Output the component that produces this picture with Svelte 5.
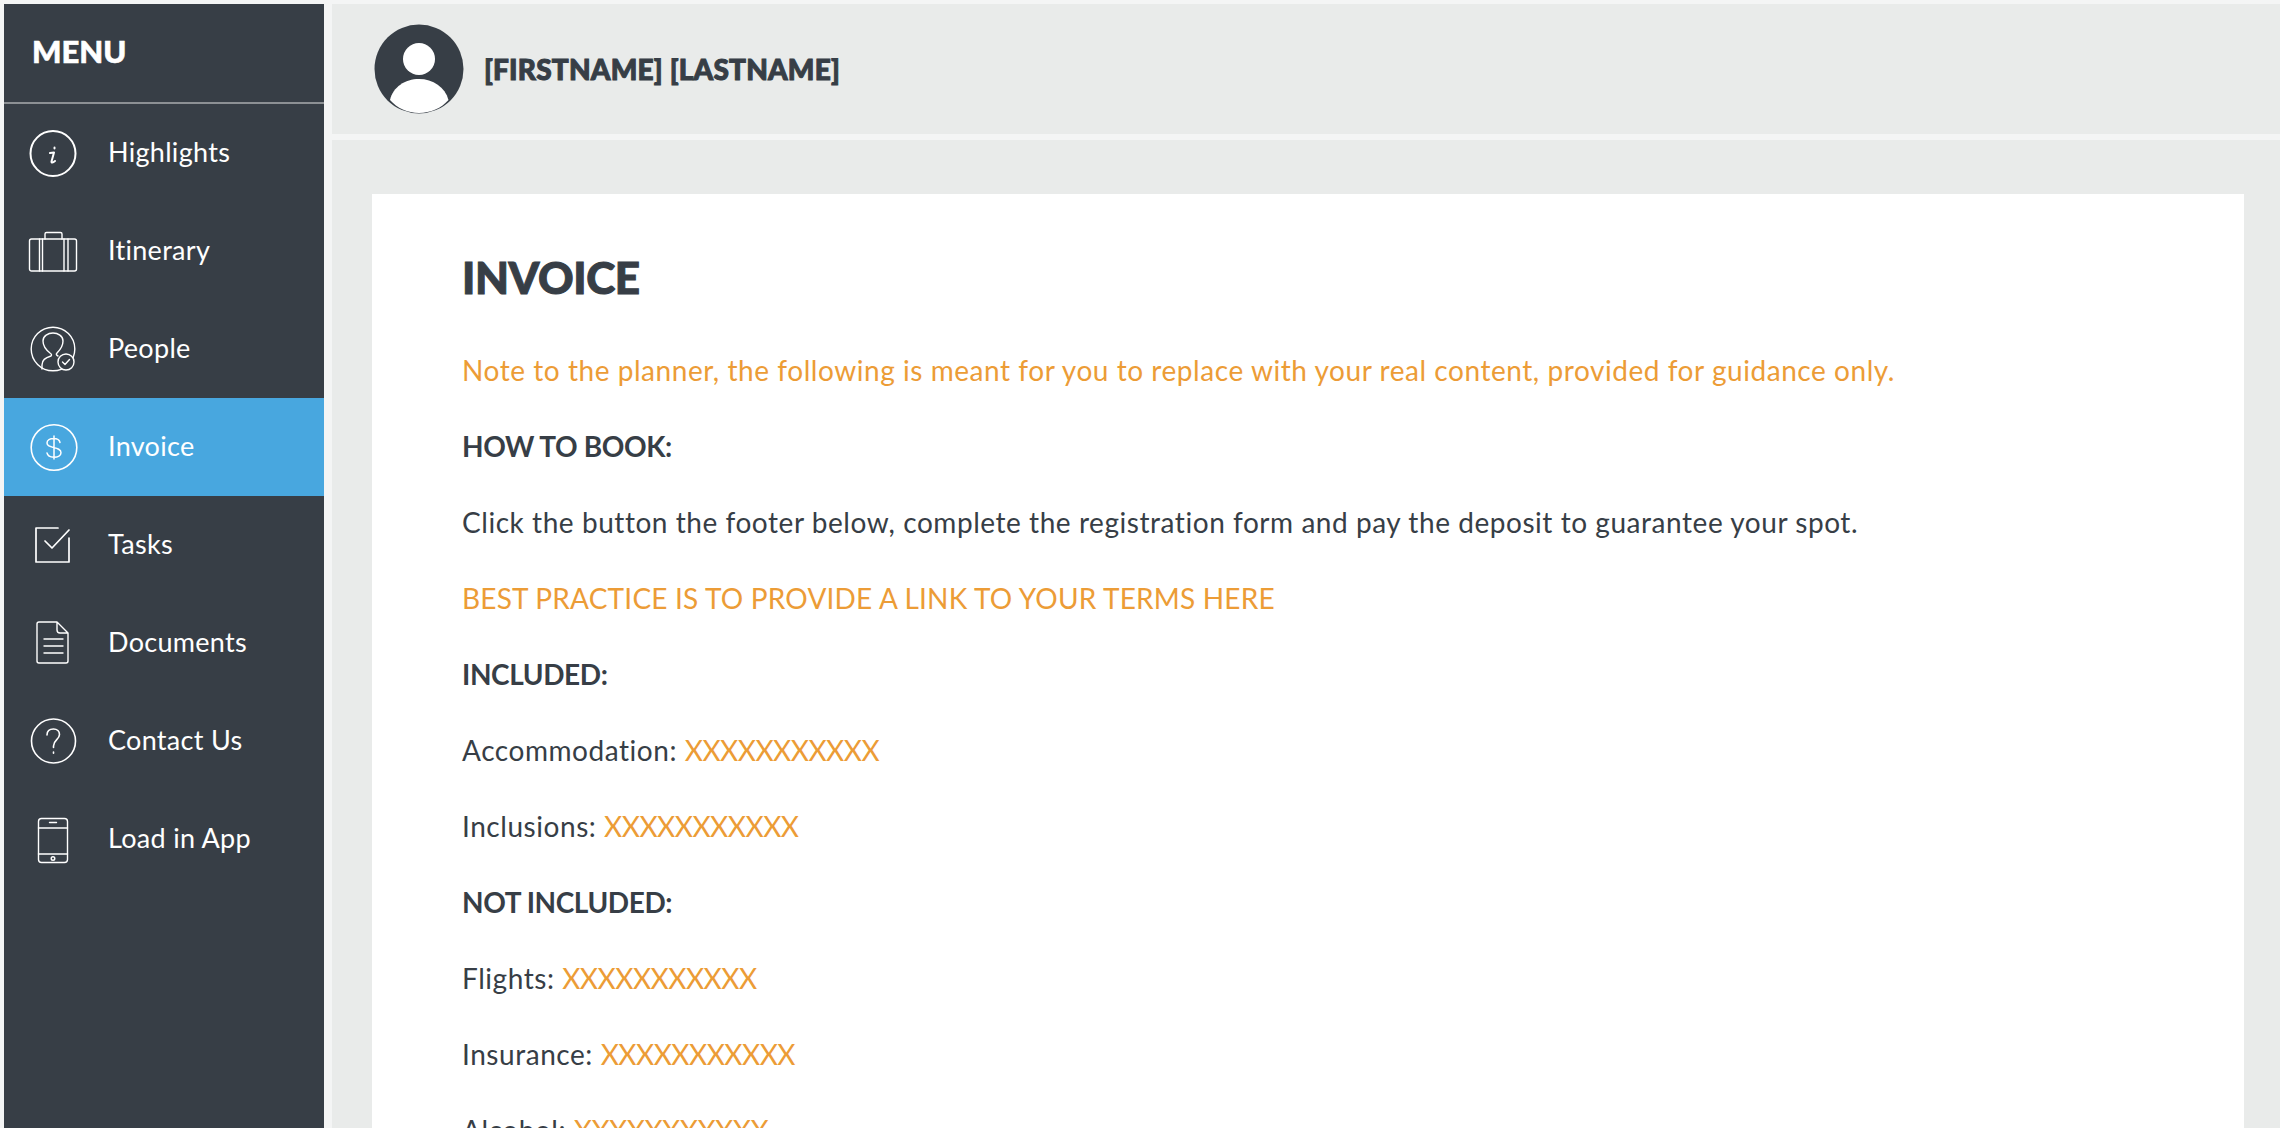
<script>
  const menu = [
    { label: 'Highlights', icon: 'info' },
    { label: 'Itinerary', icon: 'case' },
    { label: 'People', icon: 'person' },
    { label: 'Invoice', icon: 'dollar', active: true },
    { label: 'Tasks', icon: 'task' },
    { label: 'Documents', icon: 'doc' },
    { label: 'Contact Us', icon: 'help' },
    { label: 'Load in App', icon: 'phone' }
  ]

  const lines = [
    { label: 'Accommodation:', value: 'XXXXXXXXXXX' },
    { label: 'Inclusions:', value: 'XXXXXXXXXXX' }
  ]

  const notIncluded = [
    { label: 'Flights:', value: 'XXXXXXXXXXX' },
    { label: 'Insurance:', value: 'XXXXXXXXXXX' },
    { label: 'Alcohol:', value: 'XXXXXXXXXXX' }
  ]
</script>

<div class="page">
  <nav class="sidebar">
    <div class="menu-title">MENU</div>
    <ul>
      {#each menu as item}
        <li class:active={item.active}>
          <svg class="icon" viewBox="0 0 50 50" fill="none" stroke="#fff" stroke-width="1.4" stroke-linecap="round" stroke-linejoin="round">
            {#if item.icon === 'info'}
              <circle cx="25" cy="25.500" r="22.500" stroke-width="2" />
              <path d="M26.500 19.500v1M22 25l4-.6-2.500 9.200c-.2 1.300 1.200 1.400 3.500-.6" stroke-width="2" />
            {:else if item.icon === 'case'}
              <rect x="1.500" y="13" width="47" height="32" rx="2" />
              <path d="M17 13V8q0-1.500 1.500-1.500h14q1.500 0 1.500 1.500v5M11.500 13v32M14.500 13v32M36 13v32M40 13v32" />
            {:else if item.icon === 'person'}
              <circle cx="25" cy="25" r="21.800" />
              <path d="M14 45v-4c0-5 3-7 9-9 1-1 .5-2-1-3-5-4-7-9-7-12 0-5 5-8 10-8s10 3 10 8c0 3-2 8-6 12-1 1-1 2 1 3" />
              <circle cx="38" cy="38" r="8" fill="#373e46" />
              <path d="M34.500 38l2.500 2.500 4.500-5" />
            {:else if item.icon === 'dollar'}
              <circle cx="26" cy="25.500" r="22.800" stroke-width="1.600" />
              <path d="M32 20.500c-.5-2.500-3-4-6.300-4-3.700 0-6.700 1.700-6.700 4.500 0 6.200 14 3 14 9.800 0 2.800-3.200 4.400-7 4.400-3.700 0-6.500-1.600-7-4.300M26 14v23" stroke-width="1.500" />
            {:else if item.icon === 'task'}
              <path d="M30 8H8v34h33V18" stroke-width="1.700" />
              <path d="M17 21l7 7L41 10" stroke-width="1.700" />
            {:else if item.icon === 'doc'}
              <path d="M29 4H11q-2 0-2 2v37q0 2 2 2h27q2 0 2-2V15zM29 4v8q0 3 3 3h8M16 21h19M16 28h19M16 35h19" />
            {:else if item.icon === 'help'}
              <circle cx="25.500" cy="25" r="22" stroke-width="1.600" />
              <path d="M19 19c0-4 2.800-6 6.500-6s6 2.500 6 5.500c0 5-6 5.500-6 11.500v1.500M25.500 36v1.200" stroke-width="1.600" />
            {:else}
              <rect x="10.500" y="4.500" width="29" height="44" rx="3" />
              <path d="M10.500 14h29M10.500 40h29M21.500 8.500h7" />
              <circle cx="25" cy="44.500" r="1.800" />
            {/if}
          </svg>
          <span>{item.label}</span>
        </li>
      {/each}
    </ul>
  </nav>

  <div class="content">
    <header>
      <svg class="avatar" viewBox="0 0 90 90">
        <circle cx="45" cy="45" r="44.500" fill="#373e46" />
        <circle cx="45" cy="35" r="16" fill="#fff" />
        <path d="M16 76c3-13 15-21 29-21s26 8 29.500 21c-7 8-18 13-29.500 13s-22-5-29-13z" fill="#fff" />
      </svg>
      <span class="name">[FIRSTNAME] [LASTNAME]</span>
    </header>

    <main>
      <article>
        <h1>INVOICE</h1>
        <p class="note">Note to the planner, the following is meant for you to replace with your real content, provided for guidance only.</p>
        <p class="head">HOW TO BOOK:</p>
        <p>Click the button the footer below, complete the registration form and pay the deposit to guarantee your spot.</p>
        <p class="note caps">BEST PRACTICE IS TO PROVIDE A LINK TO YOUR TERMS HERE</p>
        <p class="head">INCLUDED:</p>
        {#each lines as line}
          <p>{line.label} <span class="note xs">{line.value}</span></p>
        {/each}
        <p class="head">NOT INCLUDED:</p>
        {#each notIncluded as line}
          <p>{line.label} <span class="note xs">{line.value}</span></p>
        {/each}
      </article>
    </main>
  </div>
</div>

<style>
  :global(body) {
    margin: 0;
    background: #f4f5f5;
    overflow: hidden;
  }

  .page {
    display: flex;
    gap: 8px;
    height: 1128px;
    padding: 4px 0 0 4px;
    box-sizing: border-box;
    overflow: hidden;
    font-family: Lato, "Open Sans", sans-serif;
    color: #373e46;
  }

  .sidebar {
    flex: 0 0 320px;
    background: #373e46;
    color: #fff;
  }

  .menu-title {
    height: 100px;
    padding-left: 28px;
    box-sizing: border-box;
    border-bottom: 2px solid #8c9094;
    font-size: 31px;
    font-weight: 900;
    line-height: 95px;
    -webkit-text-stroke: 0.6px #fff;
  }

  ul {
    list-style: none;
    margin: 0;
    padding: 0;
  }

  li {
    display: flex;
    align-items: center;
    height: 98px;
    padding-left: 24px;
    font-size: 27px;
    letter-spacing: 0.3px;
  }

  li span {
    margin-top: -4px;
  }

  li.active {
    background: #48a7df;
  }

  .icon {
    width: 50px;
    height: 50px;
    margin-right: 30px;
  }

  .content {
    flex: 1;
    display: flex;
    flex-direction: column;
    gap: 6px;
    min-width: 0;
  }

  header {
    display: flex;
    align-items: center;
    height: 130px;
    padding-left: 42px;
    flex: none;
    background: #e9ebea;
  }

  .avatar {
    width: 90px;
    height: 90px;
    margin-right: 20px;
  }

  .name {
    font-size: 28px;
    font-weight: 900;
    letter-spacing: 0.2px;
    -webkit-text-stroke: 1px #373e46;
  }

  main {
    flex: 1;
    padding: 54px 36px 0 40px;
    background: #e9ebea;
  }

  article {
    height: 100%;
    padding: 57px 90px;
    background: #fff;
  }

  h1 {
    margin: 0 0 49px;
    font-size: 44px;
    font-weight: 900;
    letter-spacing: -0.4px;
    -webkit-text-stroke: 1px #373e46;
  }

  p {
    margin: 0 0 40px;
    font-size: 28px;
    letter-spacing: 0.55px;
    line-height: 36px;
    color: #373e46;
  }

  .note {
    color: #ec9c36;
  }

  .caps {
    letter-spacing: 0.2px;
  }

  .xs {
    letter-spacing: -0.5px;
  }

  .head {
    font-weight: 700;
    letter-spacing: -0.4px;
  }
</style>
